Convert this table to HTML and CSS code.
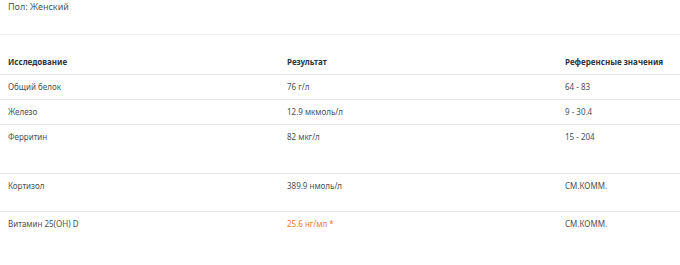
FILE: index.html
```html
<!DOCTYPE html>
<html lang="ru">
<head>
<meta charset="utf-8">
<link rel="stylesheet" href="styles.css">
</head>
<body>
<div class="page">
  <div class="sex">Пол: Женский</div>
  <div class="table">
    <div class="row head">
      <div>Исследование</div><div>Результат</div><div>Референсные значения</div>
    </div>
    <div class="row">
      <div>Общий белок</div><div>76 г/л</div><div>64 - 83</div>
    </div>
    <div class="row">
      <div>Железо</div><div>12.9 мкмоль/л</div><div>9 - 30.4</div>
    </div>
    <div class="row tall">
      <div>Ферритин</div><div>82 мкг/л</div><div>15 - 204</div>
    </div>
    <div class="row mid">
      <div>Кортизол</div><div>389.9 нмоль/л</div><div>СМ.КОММ.</div>
    </div>
    <div class="row last">
      <div>Витамин 25(OH) D</div><div class="warn">25.6 нг/мл *</div><div>СМ.КОММ.</div>
    </div>
  </div>
</div>
</body>
</html>
```
FILE: styles.css
```css
html, body {
  margin: 0;
  padding: 0;
  background: #ffffff;
}
.page {
  width: 680px;
  font-family: "Noto Sans", "Open Sans", sans-serif;
  color: #4a4f57;
  font-size: 8px;
}
.sex {
  padding: 1px 8px 21px;
  line-height: 12px;
  font-size: 9px;
  color: #4f545c;
  border-bottom: 1px solid #f2f2f2;
}
.row {
  display: grid;
  grid-template-columns: 279px 278px 1fr;
  padding: 6px 0 6px 8px;
  line-height: 12px;
  border-bottom: 1px solid #e6e6e6;
}
.row.head {
  padding-top: 21px;
  padding-bottom: 6px;
  font-weight: 700;
  font-size: 8px;
  color: #2f3640;
}
.row.tall {
  padding-bottom: 30px;
}
.row.mid {
  padding-bottom: 19px;
}
.row.last {
  border-bottom: none;
}
.warn {
  color: #ea7a2f;
}
```
